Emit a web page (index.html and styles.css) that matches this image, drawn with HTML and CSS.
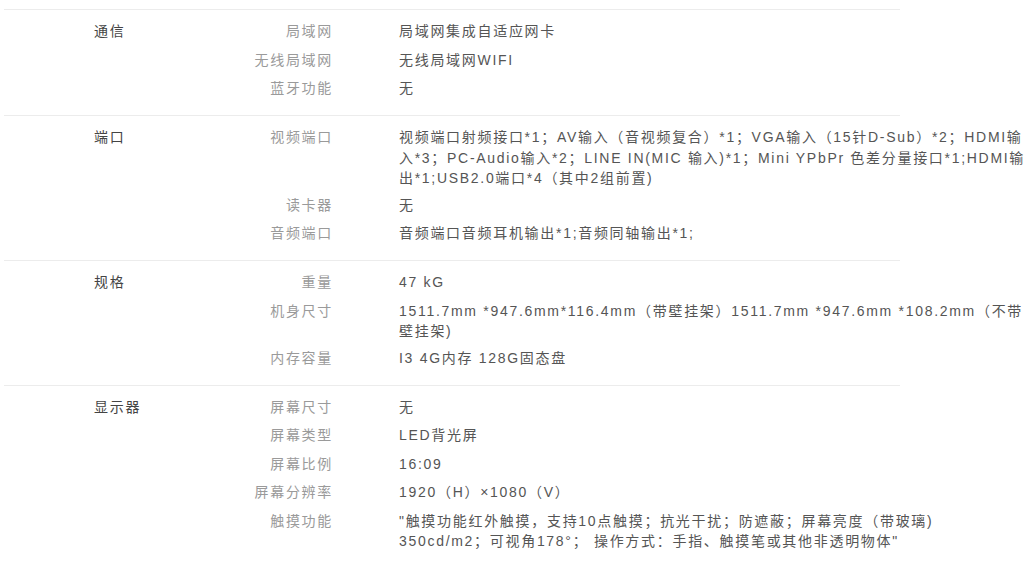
FILE: index.html
```html
<!DOCTYPE html>
<html lang="zh-CN">
<head>
<meta charset="utf-8">
<title>参数</title>
<link rel="stylesheet" href="styles.css">
</head>
<body>
<div class="specs">
  <section class="group">
    <div class="cat">通信</div>
    <div class="rows">
      <div class="row"><div class="label">局域网</div><div class="value">局域网集成自适应网卡</div></div>
      <div class="row"><div class="label">无线局域网</div><div class="value">无线局域网WIFI</div></div>
      <div class="row"><div class="label">蓝牙功能</div><div class="value">无</div></div>
    </div>
  </section>
  <section class="group">
    <div class="cat">端口</div>
    <div class="rows">
      <div class="row"><div class="label">视频端口</div><div class="value">视频端口射频接口*1；AV输入（音视频复合）*1；VGA输入（15针D-Sub）*2；HDMI输入*3；PC-Audio输入*2；LINE IN(MIC 输入)*1；Mini YPbPr 色差分量接口*1;HDMI输出*1;USB2.0端口*4（其中2组前置)</div></div>
      <div class="row"><div class="label">读卡器</div><div class="value">无</div></div>
      <div class="row"><div class="label">音频端口</div><div class="value">音频端口音频耳机输出*1;音频同轴输出*1;</div></div>
    </div>
  </section>
  <section class="group">
    <div class="cat">规格</div>
    <div class="rows">
      <div class="row"><div class="label">重量</div><div class="value">47 kG</div></div>
      <div class="row"><div class="label">机身尺寸</div><div class="value">1511.7mm *947.6mm*116.4mm（带壁挂架）1511.7mm *947.6mm *108.2mm（不带壁挂架)</div></div>
      <div class="row"><div class="label">内存容量</div><div class="value">I3 4G内存 128G固态盘</div></div>
    </div>
  </section>
  <section class="group">
    <div class="cat">显示器</div>
    <div class="rows">
      <div class="row"><div class="label">屏幕尺寸</div><div class="value">无</div></div>
      <div class="row"><div class="label">屏幕类型</div><div class="value">LED背光屏</div></div>
      <div class="row"><div class="label">屏幕比例</div><div class="value">16:09</div></div>
      <div class="row"><div class="label">屏幕分辨率</div><div class="value">1920（H）×1080（V）</div></div>
      <div class="row"><div class="label">触摸功能</div><div class="value">"触摸功能红外触摸，支持10点触摸；抗光干扰；防遮蔽；屏幕亮度（带玻璃)<br>350cd/m2；可视角178°； 操作方式：手指、触摸笔或其他非透明物体"</div></div>
    </div>
  </section>
</div>
</body>
</html>
```

FILE: styles.css
```css
html, body {
  margin: 0;
  padding: 0;
  background: #fff;
  overflow: hidden;
}
body {
  font-family: "Liberation Sans", "Noto Sans CJK SC", sans-serif;
  font-size: 14px;
  line-height: 20.5px;
  letter-spacing: 1.7px;
  color: #555;
}
.specs {
  padding-top: 9px;
}
.group {
  display: flex;
  width: 896px;
  margin-left: 4px;
  border-top: 1px solid #ececec;
  padding: 8px 0 11.5px;
}
.cat {
  flex: 0 0 auto;
  width: 100px;
  margin-left: 90px;
  padding: 3px 0;
  color: #444;
}
.rows {
  flex: 0 0 auto;
  display: flex;
  flex-direction: column;
}
.row {
  display: flex;
  min-height: 22.5px;
  padding: 3px 0;
}
.label {
  flex: 0 0 139px;
  text-align: right;
  color: #9a9a9a;
  margin-right: -1.7px;
}
.value {
  flex: 0 0 630px;
  margin-left: 67.7px;
  color: #555;
}
```
